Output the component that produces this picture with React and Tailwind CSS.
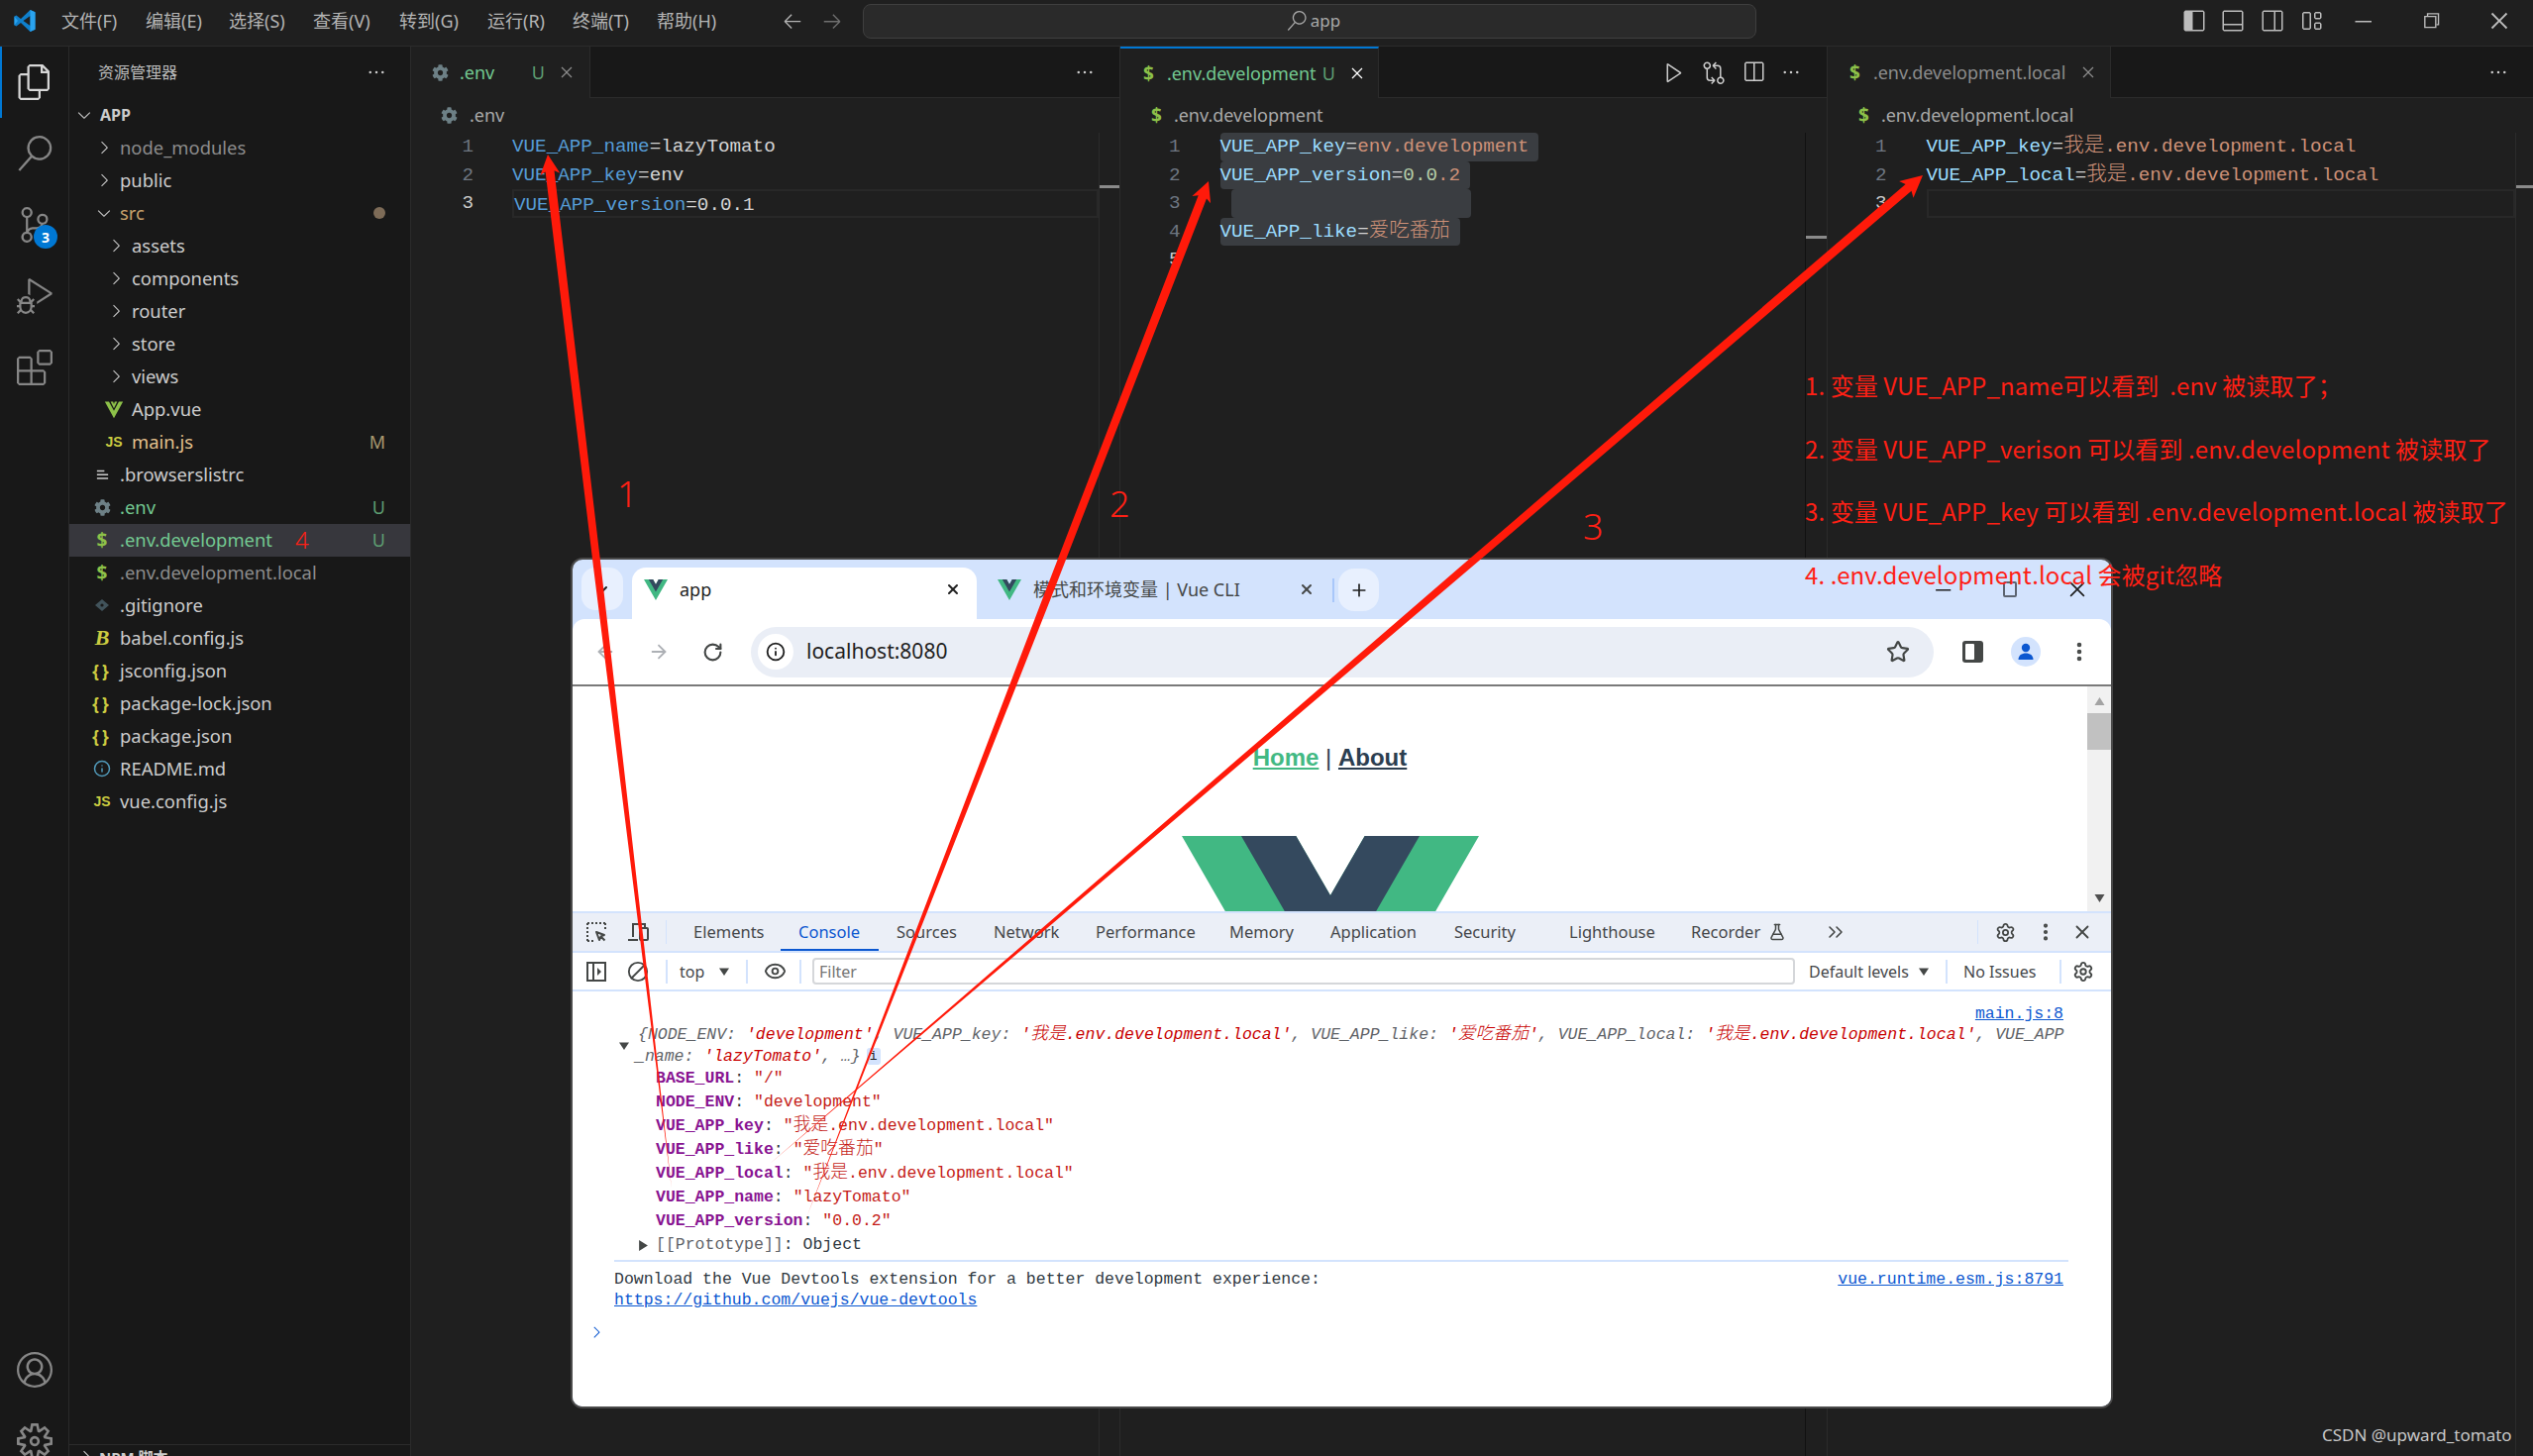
import React from 'react';
import {
  VscFiles, VscSearch, VscSourceControl, VscDebugAlt, VscExtensions, VscAccount, VscSettingsGear,
  VscEllipsis, VscChevronRight, VscChevronDown, VscClose, VscPlay, VscGitCompare, VscSplitHorizontal,
  VscLayoutSidebarLeft, VscLayoutPanelOff, VscLayoutSidebarRightOff, VscLayout,
  VscChromeMinimize, VscChromeRestore, VscChromeClose, VscArrowLeft, VscArrowRight,
} from 'react-icons/vsc';
import { FaCog } from 'react-icons/fa';
import {
  ArrowLeft, ArrowRight, RotateCw, Info, Star, EllipsisVertical, X, Plus, ChevronDown,
  Settings, FlaskConical, ChevronsRight, Eye, Ban,
} from 'lucide-react';

const uiFont = "font-['Noto_Sans','Noto_Sans_CJK_SC',sans-serif]";
const monoFont = "font-['Liberation_Mono','Noto_Sans_CJK_SC',monospace]";

const menus = [
  { label: '文件(F)', w: 'w-[85px]' },
  { label: '编辑(E)', w: 'w-[84px]' },
  { label: '选择(S)', w: 'w-[85px]' },
  { label: '查看(V)', w: 'w-[87px]' },
  { label: '转到(G)', w: 'w-[89px]' },
  { label: '运行(R)', w: 'w-[86px]' },
  { label: '终端(T)', w: 'w-[85px]' },
  { label: '帮助(H)', w: 'w-[85px]' },
];

// Explorer rows
const tree = [
  { label: 'APP', pad: 'pl-[7px]', chevron: 'down', cls: 'text-[#cccccc] font-bold text-[16px]' },
  { label: 'node_modules', pad: 'pl-[27px]', chevron: 'right', cls: 'text-[#8c8c8c]' },
  { label: 'public', pad: 'pl-[27px]', chevron: 'right', cls: 'text-[#cccccc]' },
  { label: 'src', pad: 'pl-[27px]', chevron: 'down', cls: 'text-[#c9a26d]', dot: true },
  { label: 'assets', pad: 'pl-[39px]', chevron: 'right', cls: 'text-[#cccccc]' },
  { label: 'components', pad: 'pl-[39px]', chevron: 'right', cls: 'text-[#cccccc]' },
  { label: 'router', pad: 'pl-[39px]', chevron: 'right', cls: 'text-[#cccccc]' },
  { label: 'store', pad: 'pl-[39px]', chevron: 'right', cls: 'text-[#cccccc]' },
  { label: 'views', pad: 'pl-[39px]', chevron: 'right', cls: 'text-[#cccccc]' },
  { label: 'App.vue', pad: 'pl-[39px]', icon: 'vue', cls: 'text-[#cccccc]' },
  { label: 'main.js', pad: 'pl-[39px]', icon: 'js', cls: 'text-[#e2c08d]', badge: 'M' },
  { label: '.browserslistrc', pad: 'pl-[28px]', icon: 'lines', cls: 'text-[#cccccc]' },
  { label: '.env', pad: 'pl-[28px]', icon: 'gear', cls: 'text-[#73c991]', badge: 'U' },
  { label: '.env.development', pad: 'pl-[28px]', icon: 'dollar', cls: 'text-[#73c991]', badge: 'U', note: '4', active: true },
  { label: '.env.development.local', pad: 'pl-[28px]', icon: 'dollar', cls: 'text-[#8c8c8c]' },
  { label: '.gitignore', pad: 'pl-[28px]', icon: 'git', cls: 'text-[#cccccc]' },
  { label: 'babel.config.js', pad: 'pl-[28px]', icon: 'babel', cls: 'text-[#cccccc]' },
  { label: 'jsconfig.json', pad: 'pl-[28px]', icon: 'json', cls: 'text-[#cccccc]' },
  { label: 'package-lock.json', pad: 'pl-[28px]', icon: 'json', cls: 'text-[#cccccc]' },
  { label: 'package.json', pad: 'pl-[28px]', icon: 'json', cls: 'text-[#cccccc]' },
  { label: 'README.md', pad: 'pl-[28px]', icon: 'info', cls: 'text-[#cccccc]' },
  { label: 'vue.config.js', pad: 'pl-[28px]', icon: 'js', cls: 'text-[#cccccc]' },
];

const VueMark = ({ className }) => (
  <svg viewBox="0 0 261.76 226.69" className={className}>
    <path d="M161.096.001l-30.225 52.351L100.647.001H-.005l130.877 226.688L261.749.001z" fill="#41b883" />
    <path d="M161.096.001l-30.225 52.351L100.647.001H52.346l78.526 136.01L209.398.001z" fill="#34495e" />
  </svg>
);

const Dollar = ({ className = '' }) => <span className={`text-[#8dc149] font-bold text-[19px] leading-none ${className}`}>$</span>;

const FileGlyph = ({ kind }) => {
  if (kind === 'gear') return <FaCog className="text-[#6d8086] w-[17px] h-[17px]" />;
  if (kind === 'dollar') return <Dollar />;
  if (kind === 'js') return <span className="text-[#cbcb41] font-bold text-[14px] leading-none font-['Liberation_Sans',sans-serif]">JS</span>;
  if (kind === 'json') return <span className="text-[#cbcb41] font-bold text-[17px] leading-none tracking-[3px]">{'{}'}</span>;
  if (kind === 'babel') return <span className="text-[#cbcb41] font-bold italic text-[22px] leading-none font-['Liberation_Serif',serif]">B</span>;
  if (kind === 'info') return <Info className="text-[#519aba] w-[18px] h-[18px]" />;
  if (kind === 'vue') {
    return (
      <svg viewBox="0 0 24 24" className="w-[20px] h-[20px]">
        <path d="M1 3h5l6 11 6-11h5L12 23z" fill="#8dc149" />
        <path d="M8 3h3l1 3 1-3h3l-4 8z" fill="#8dc149" />
      </svg>
    );
  }
  if (kind === 'git') {
    return (
      <svg viewBox="0 0 16 16" className="w-[16px] h-[16px]">
        <path d="M8 2l7 6-7 6-7-6z" fill="#41535b" />
        <circle cx="8" cy="8" r="1.6" fill="#181818" />
      </svg>
    );
  }
  if (kind === 'lines') {
    return (
      <svg viewBox="0 0 16 16" className="w-[15px] h-[15px]">
        <path d="M2 3h8v1.6H2zM2 7h12v1.6H2zM2 11h12v1.6H2z" fill="#cccccc" />
      </svg>
    );
  }
  return null;
};

const TreeRow = ({ row }) => (
  <div className={`h-[33px] flex items-center pr-[25px] ${row.pad} ${row.active ? 'bg-[#37373d]' : ''}`}>
    {row.chevron && (
      <span className="w-[16px] mr-[-1px] flex justify-center text-[#c5c5c5]">
        {row.chevron === 'down' ? <VscChevronDown className="w-[20px] h-[20px] shrink-0" /> : <VscChevronRight className="w-[20px] h-[20px] shrink-0" />}
      </span>
    )}
    {row.icon && (
      <span className={`flex items-center justify-center ${row.pad === 'pl-[39px]' ? 'w-[20px] -ml-[4px] mr-[8px]' : 'w-[20px] -ml-[5px] mr-[8px]'}`}>
        <FileGlyph kind={row.icon} />
      </span>
    )}
    <span className={`whitespace-nowrap ${row.chevron ? 'ml-[9px]' : ''} ${row.cls}`}>{row.label}</span>
    {row.note && <span className="ml-[23px] text-[#ff2015] text-[24px] leading-none font-light">{row.note}</span>}
    <span className="ml-auto">
      {row.dot && <span className="block w-[12px] h-[12px] rounded-full bg-[#7d6b57]" />}
      {row.badge && <span className={`block text-[18px] ${row.badge === 'M' ? 'text-[#a8996f]' : 'text-[#5e9e72]'}`}>{row.badge}</span>}
    </span>
  </div>
);

const K = ({ c = 'text-[#9cdcfe]', children }) => <span className={c}>{children}</span>;
const V = ({ children }) => <span className="text-[#ce9178]">{children}</span>;
const Cjk = ({ children }) => <span className="text-[20.5px] leading-[0] font-['Noto_Sans_CJK_SC',sans-serif] font-light">{children}</span>;

// one editor split
const EditorGroup = ({ width, tabWidth, tab, crumbIcon, crumbPad, gutter, codePad, lines, actions, overview, markGap, ruleColor = 'border-[#2b2b2b]' }) => (
  <section className={`${width} shrink-0 flex flex-col border-l border-[#2b2b2b] bg-[#1f1f1f] overflow-hidden`}>
    <div className="h-[52px] shrink-0 flex bg-[#181818] border-b border-[#2b2b2b]">
      <div className={`${tabWidth} h-[52px] shrink-0 flex items-center bg-[#1f1f1f] border-r border-[#2b2b2b] text-[18px] ${tab.activeTab ? 'border-t-2 border-t-[#0078d4]' : ''} ${tab.pad}`}>
        {tab.icon}
        <span className={`ml-[13px] whitespace-nowrap ${tab.color}`}>{tab.label}</span>
        <span className="ml-auto flex items-center gap-[12px]">
          {tab.badge && <span className="text-[#5e9e72] text-[18px]">{tab.badge}</span>}
          <VscClose className={`w-[20px] h-[20px] ${tab.activeTab ? 'text-white' : 'text-[#8c8c8c]'}`} />
        </span>
      </div>
      <div className="ml-auto flex items-center pr-[13px] text-[#cccccc]">{actions}</div>
    </div>
    <div className={`h-[35px] shrink-0 flex items-center gap-[12px] text-[#a9a9a9] text-[18px] ${crumbPad}`}>
      {crumbIcon}
      <span>{tab.label}</span>
    </div>
    <div className="flex-1 flex min-h-0">
      <div className={`${gutter} shrink-0 text-right text-[#6e7681] text-[19.25px] ${monoFont}`}>
        {lines.map((_, i) => (
          <div key={i} className={`h-[28.5px] leading-[28.5px] ${lines[i].current ? 'text-[#cccccc]' : ''}`}>{i + 1}</div>
        ))}
      </div>
      <div className={`flex-1 min-w-0 ${codePad} text-[19.25px] text-[#d4d4d4] whitespace-nowrap ${monoFont}`}>
        {lines.map((l, i) => (
          <div key={i} className={`h-[28.5px] leading-[28.5px] ${l.highlight ? 'border-2 border-[#282828] leading-[23px] box-border' : ''}`}>{l.body}</div>
        ))}
      </div>
      <div className={`${overview} shrink-0 border-l ${ruleColor}`}>
        <div className={`${markGap} h-[3px] bg-[#8a8a8a]`} />
      </div>
    </div>
  </section>
);

// tapered annotation arrow, tail thins out to nothing
const arrowPoints = ([tx, ty], [bx, by], headLen, headW, shaft) => {
  const len = Math.hypot(bx - tx, by - ty);
  const ux = (bx - tx) / len;
  const uy = (by - ty) / len;
  const at = (d, off) => `${(tx + ux * d - uy * off).toFixed(1)},${(ty + uy * d + ux * off).toFixed(1)}`;
  const stations = [[headLen - 3, 1], [len * 0.4, 0.85], [len * 0.8, 0.32], [len, 0]];
  const a = stations.map(([d, k]) => at(d, (shaft / 2) * k));
  const b = stations.slice().reverse().map(([d, k]) => at(d, (-shaft / 2) * k));
  return [at(0, 0), at(headLen, headW / 2), ...a, ...b, at(headLen, -headW / 2)].join(' ');
};

const devtoolsTabs = [
  { label: 'Elements', w: 'w-[106px]' },
  { label: 'Console', w: 'w-[99px]', active: true },
  { label: 'Sources', w: 'w-[98px]' },
  { label: 'Network', w: 'w-[103px]' },
  { label: 'Performance', w: 'w-[135px]' },
  { label: 'Memory', w: 'w-[102px]' },
  { label: 'Application', w: 'w-[125px]' },
  { label: 'Security', w: 'w-[116px]' },
  { label: 'Lighthouse', w: 'w-[123px]' },
  { label: 'Recorder', w: 'w-[134px]', flask: true },
];

const propRows = [
  { key: 'BASE_URL', val: '"/"' },
  { key: 'NODE_ENV', val: '"development"' },
  { key: 'VUE_APP_key', val: <>"<CC>我是</CC>.env.development.local"</> },
  { key: 'VUE_APP_like', val: <>"<CC>爱吃番茄</CC>"</> },
  { key: 'VUE_APP_local', val: <>"<CC>我是</CC>.env.development.local"</> },
  { key: 'VUE_APP_name', val: '"lazyTomato"' },
  { key: 'VUE_APP_version', val: '"0.0.2"' },
];

function CC({ children }) {
  return <span className="text-[17.8px] leading-[0] font-['Noto_Sans_CJK_SC',sans-serif] font-light">{children}</span>;
}

const Sep = ({ className = '' }) => <div className={`w-[2px] h-[24px] bg-[#d3e3fd] shrink-0 ${className}`} />;
const Caret = ({ className = '' }) => (
  <svg viewBox="0 0 10 10" className={`w-[10px] h-[10px] shrink-0 ${className}`}><path d="M0 1.5h10L5 9z" fill="#444746" /></svg>
);

const BrowserWindow = () => (
  <div className={`absolute left-[576px] top-[563px] w-[1557px] h-[859px] border-2 border-[#4a4a4a] rounded-[12px] overflow-hidden bg-[#d3e3fd] flex flex-col ${uiFont}`}>
    {/* tab strip */}
    <div className="h-[60px] shrink-0 flex pl-[9px]">
      <div className="w-[42px] h-[43px] mt-[8px] rounded-[14px] bg-[#e8f0fe] flex items-center justify-center">
        <ChevronDown className="w-[16px] h-[16px] text-[#1f1f1f]" strokeWidth={3} />
      </div>
      <div className="w-[348px] h-[52px] mt-[8px] ml-[9px] rounded-t-[14px] bg-white flex items-center pl-[12px] pr-[16px] pb-[8px]">
        <VueMark className="w-[24px] h-[21px]" />
        <span className="ml-[12px] text-[18px] text-[#1f1f1f]">app</span>
        <X className="ml-auto w-[16px] h-[16px] text-[#1f1f1f]" strokeWidth={3} />
      </div>
      <div className="w-[359px] h-[52px] mt-[8px] flex items-center pl-[21px] pr-[18px] pb-[8px]">
        <VueMark className="w-[24px] h-[21px]" />
        <span className="ml-[12px] text-[18px] text-[#444746] whitespace-nowrap">模式和环境变量 | Vue CLI</span>
        <X className="ml-auto w-[16px] h-[16px] text-[#444746]" strokeWidth={3} />
      </div>
      <div className="w-[2px] h-[24px] mt-[19px] bg-[#a8c7fa]" />
      <div className="w-[41px] h-[43px] mt-[9px] ml-[4px] rounded-[16px] bg-[#e8f0fe] flex items-center justify-center">
        <Plus className="w-[20px] h-[20px] text-[#1f1f1f]" />
      </div>
      <div className="ml-auto flex text-[#1f1f1f]">
        <div className="w-[68px] flex items-center justify-center"><VscChromeMinimize className="w-[22px] h-[22px]" /></div>
        <div className="w-[68px] flex items-center justify-center"><div className="w-[14px] h-[16px] border-2 border-[#5c6470] rounded-[2px]" /></div>
        <div className="w-[68px] flex items-center justify-center"><VscChromeClose className="w-[22px] h-[22px]" /></div>
      </div>
    </div>

    {/* toolbar */}
    <div className="h-[68px] shrink-0 rounded-t-[12px] bg-white border-b-2 border-[#7a7a7a] flex items-center pl-[6px]">
      <div className="w-[54px] flex justify-center"><ArrowLeft className="w-[22px] h-[22px] text-[#adb0b5]" /></div>
      <div className="w-[54px] flex justify-center"><ArrowRight className="w-[22px] h-[22px] text-[#adb0b5]" /></div>
      <div className="w-[54px] flex justify-center"><RotateCw className="w-[21px] h-[21px] text-[#444746]" strokeWidth={2.4} /></div>
      <div className="ml-[12px] w-[1194px] h-[51px] rounded-full bg-[#eaeef6] flex items-center pl-[7px] pr-[24px]">
        <div className="w-[36px] h-[36px] rounded-full bg-white flex items-center justify-center">
          <Info className="w-[20px] h-[20px] text-[#1f1f1f]" strokeWidth={2.2} />
        </div>
        <span className="ml-[13px] text-[21px] text-[#1f1f1f]">localhost:8080</span>
        <Star className="ml-auto w-[24px] h-[24px] text-[#444746]" strokeWidth={2.2} />
      </div>
      <div className="ml-[12px] w-[54px] flex justify-center">
        <div className="w-[21px] h-[22px] rounded-[3px] bg-[#444746] p-[3px] pr-[9px]"><div className="w-full h-full bg-white rounded-[1px]" /></div>
      </div>
      <div className="w-[54px] flex justify-center">
        <div className="w-[30px] h-[30px] rounded-full bg-[#d3e3fd] flex items-center justify-center">
          <svg viewBox="0 0 20 20" className="w-[20px] h-[20px]"><circle cx="10" cy="6" r="4.2" fill="#0b57d0" /><path d="M2.5 18c0-4.6 3.4-6.6 7.5-6.6s7.5 2 7.5 6.6z" fill="#0b57d0" /></svg>
        </div>
      </div>
      <div className="w-[54px] flex justify-center"><EllipsisVertical className="w-[24px] h-[24px] text-[#444746]" strokeWidth={2.6} /></div>
    </div>

    {/* page */}
    <div className="h-[227px] shrink-0 bg-white flex">
      <div className="flex-1 min-w-0 overflow-hidden flex flex-col items-center pt-[58px] font-['Liberation_Sans',sans-serif]">
        <div className="h-[28px] leading-[28px] text-[24px] font-bold text-[#2c3e50] whitespace-nowrap">
          <span className="text-[#42b983] underline">Home</span>
          <span className="font-normal"> | </span>
          <span className="underline">About</span>
        </div>
        <VueMark className="w-[300px] h-[260px] shrink-0 mt-[65px]" />
      </div>
      <div className="w-[24px] shrink-0 bg-[#f1f1f1] flex flex-col items-center">
        <div className="h-[19px] flex items-end"><svg viewBox="0 0 10 8" className="w-[11px] h-[8px]"><path d="M5 0l5 8H0z" fill="#a3a3a3" /></svg></div>
        <div className="mt-[8px] w-full h-[37px] bg-[#c1c1c1]" />
        <div className="mt-auto mb-[9px]"><svg viewBox="0 0 10 8" className="w-[11px] h-[8px]"><path d="M0 0h10L5 8z" fill="#505050" /></svg></div>
      </div>
    </div>

    {/* devtools tabs */}
    <div className="h-[42px] shrink-0 bg-[#ebeff7] border-t-2 border-b-2 border-[#d3e3fd] flex items-center pl-[3px] text-[#45474a] text-[16.5px]">
      <div className="w-[42px] flex justify-center">
        <svg viewBox="0 0 24 24" className="w-[24px] h-[24px]" fill="none" stroke="#444746" strokeWidth="2">
          <path d="M3 3h18M3 3v18M3 21h6M21 3v6" strokeDasharray="2 2" />
          <path d="M12 12l8 3-3.4 1.4L15 20z M16.5 16.5l4 4" strokeLinejoin="round" />
        </svg>
      </div>
      <div className="w-[42px] flex justify-center">
        <svg viewBox="0 0 24 24" className="w-[24px] h-[24px]" fill="none" stroke="#444746" strokeWidth="2">
          <path d="M7 17V4h12v3M2 20h10" />
          <rect x="14" y="8" width="8" height="12" rx="1" />
        </svg>
      </div>
      <div className="ml-[7px] w-[1px] h-[24px] bg-[#d3e3fd] shrink-0" />
      <div className="ml-[27px] flex h-full">
        {devtoolsTabs.map((t) => (
          <div key={t.label} className={`${t.w} relative flex items-center gap-[8px] ${t.active ? 'text-[#0b57d0]' : ''}`}>
            <span>{t.label}</span>
            {t.flask && <FlaskConical className="w-[18px] h-[20px] text-[#444746]" />}
            {t.active && <div className="absolute left-[-18px] w-[99px] bottom-0 h-[2px] bg-[#0b57d0]" />}
          </div>
        ))}
      </div>
      <ChevronsRight className="w-[24px] h-[24px] text-[#444746]" strokeWidth={1.6} />
      <div className="ml-auto w-[1px] h-[24px] bg-[#d3e3fd] mr-[6px]" />
      <div className="w-[42px] flex justify-center"><Settings className="w-[21px] h-[21px] text-[#444746]" /></div>
      <div className="w-[40px] flex justify-center"><EllipsisVertical className="w-[22px] h-[22px] text-[#444746]" strokeWidth={2.6} /></div>
      <div className="w-[34px] flex justify-center mr-[12px]"><X className="w-[22px] h-[22px] text-[#444746]" /></div>
    </div>

    {/* console toolbar */}
    <div className="h-[39px] shrink-0 bg-white border-b-2 border-[#d3e3fd] flex items-center pl-[3px] text-[#45474a] text-[16px]">
      <div className="w-[42px] flex justify-center">
        <svg viewBox="0 0 22 22" className="w-[22px] h-[22px]" fill="none" stroke="#444746" strokeWidth="2">
          <rect x="2" y="2" width="18" height="18" />
          <path d="M8 2v18" />
          <path d="M12 7l4 4-4 4z" fill="#444746" stroke="none" />
        </svg>
      </div>
      <div className="w-[42px] flex justify-center"><Ban className="w-[22px] h-[22px] text-[#444746] -scale-x-100" /></div>
      <Sep className="ml-[7px]" />
      <span className="ml-[12px] w-[39px]">top</span>
      <Caret className="ml-[1px]" />
      <Sep className="ml-[17px]" />
      <div className="ml-[7px] w-[40px] flex justify-center"><Eye className="w-[23px] h-[23px] text-[#444746]" /></div>
      <Sep className="ml-[5px]" />
      <div className="ml-[11px] w-[992px] h-[27px] border-2 border-[#d5d7da] rounded-[4px] flex items-center pl-[5px] text-[#757575]">Filter</div>
      <span className="ml-[14px] w-[105px] whitespace-nowrap">Default levels</span>
      <Caret className="ml-[6px]" />
      <Sep className="ml-[17px]" />
      <span className="ml-[16px] w-[76px] whitespace-nowrap">No Issues</span>
      <Sep className="ml-[21px]" />
      <Settings className="ml-[11px] w-[22px] h-[22px] text-[#444746]" />
    </div>

    {/* console */}
    <div className={`flex-1 min-h-0 bg-white pt-[12px] text-[16.5px] whitespace-nowrap ${monoFont}`}>
      <div className="h-[22px] leading-[22px] text-right pr-[48px] text-[#0b57d0] underline">main.js:8</div>
      <div className="flex items-center -mt-[1px] ml-[42px]">
        <div className="w-[20px] flex justify-center"><Caret /></div>
        <div className="italic text-[#5f6368]">
          <div className="h-[22px] leading-[22px] pl-[4px]">
            {'{'}NODE_ENV: <span className="text-[#c80000]">'development'</span>, VUE_APP_key: <span className="text-[#c80000]">'<CC>我是</CC>.env.development.local'</span>, VUE_APP_like: <span className="text-[#c80000]">'<CC>爱吃番茄</CC>'</span>, VUE_APP_local: <span className="text-[#c80000]">'<CC>我是</CC>.env.development.local'</span>, VUE_APP
          </div>
          <div className="h-[21px] leading-[21px] pl-[1px] flex items-center">
            <span>_name: <span className="text-[#c80000]">'lazyTomato'</span>, …{'}'}</span>
            <span className="ml-[6px] w-[14px] h-[17px] rounded-[3px] bg-[#d3e3fd] text-[#1f1f1f] not-italic text-[13px] flex items-center justify-center">i</span>
          </div>
        </div>
      </div>
      {propRows.map((r) => (
        <div key={r.key} className="h-[24px] leading-[24px] pl-[84px] text-[#c41a16]">
          <span className="text-[#881391] font-bold">{r.key}</span><span className="text-[#303942]">: </span>{r.val}
        </div>
      ))}
      <div className="h-[24px] flex items-center pl-[67px] text-[#5f6368]">
        <svg viewBox="0 0 8 10" className="w-[9px] h-[11px] mr-[8px]"><path d="M0 0l8 5-8 5z" fill="#444746" /></svg>
        <span>[[Prototype]]</span><span className="text-[#303942]">: Object</span>
      </div>
      <div className="mt-[3px] ml-[42px] mr-[43px] pt-[7px] border-t-2 border-[#d3e3fd]">
        <div className="h-[21px] leading-[21px] flex justify-between pr-[5px] text-[#303942]">
          <span>Download the Vue Devtools extension for a better development experience:</span>
          <span className="text-[#0b57d0] underline">vue.runtime.esm.js:8791</span>
        </div>
        <div className="h-[21px] leading-[21px] text-[#0b57d0] underline">https://github.com/vuejs/vue-devtools</div>
      </div>
      <div className="mt-[11px] ml-[15px] h-[22px] flex items-center">
        <VscChevronRight className="w-[18px] h-[18px] text-[#0b57d0]" />
      </div>
    </div>
  </div>
);

export default function App() {
  const groups = [
    {
      width: 'w-[716px]',
      tabWidth: 'w-[181px]',
      tab: { label: '.env', color: 'text-[#73c991]', badge: 'U', pad: 'pl-[21px] pr-[13px]', icon: <FaCog className="text-[#6d8086] w-[17px] h-[17px] -mr-[2px]" /> },
      crumbIcon: <FaCog className="text-[#6d8086] w-[17px] h-[17px]" />,
      crumbPad: 'pl-[30px]',
      gutter: 'w-[63px]',
      codePad: 'pl-[39px]',
      overview: 'w-[21px]',
      markGap: 'mt-[53px]',
      lines: [
        { body: <><K c="text-[#569cd6]">VUE_APP_name</K>=lazyTomato</> },
        { body: <><K c="text-[#569cd6]">VUE_APP_key</K>=env</> },
        { current: true, highlight: true, body: <><K c="text-[#569cd6]">VUE_APP_version</K>=0.0.1</> },
      ],
      actions: <VscEllipsis className="w-[20px] h-[20px] mr-[12px]" />,
    },
    {
      width: 'w-[714px]',
      tabWidth: 'w-[261px]',
      tab: { label: '.env.development', color: 'text-[#73c991]', badge: 'U', pad: 'pl-[23px] pr-[11px]', activeTab: true, icon: <Dollar /> },
      crumbIcon: <Dollar />,
      crumbPad: 'pl-[31px]',
      gutter: 'w-[60.5px]',
      codePad: 'pl-[40px]',
      overview: 'w-[22px]',
      markGap: 'mt-[104px]',
      ruleColor: 'border-[#111111]',
      lines: [
        { body: <span className="inline-block h-full pr-[10px] bg-[#3a3d41] rounded-[4px]"><K>VUE_APP_key</K>=<V>env.development</V></span> },
        { body: <span className="inline-block h-full pr-[10px] bg-[#3a3d41] rounded-[4px]"><K>VUE_APP_version</K>=<span className="text-[#b5cea8]">0.0</span><V>.2</V></span> },
        { body: <span className="block h-full w-[242px] ml-[11px] bg-[#3a3d41] rounded-[4px]" /> },
        { body: <span className="inline-block h-full pr-[10px] bg-[#3a3d41] rounded-[4px]"><K>VUE_APP_like</K>=<V><Cjk>爱吃番茄</Cjk></V></span> },
        { current: true, body: '' },
      ],
      actions: (
        <>
          <VscPlay className="w-[24px] h-[24px] mr-[16px]" />
          <VscGitCompare className="w-[24px] h-[24px] mr-[16px]" />
          <VscSplitHorizontal className="w-[24px] h-[24px] mr-[16px]" />
          <VscEllipsis className="w-[20px] h-[20px] mr-[13px]" />
        </>
      ),
    },
    {
      width: 'w-[713px]',
      tabWidth: 'w-[286px]',
      tab: { label: '.env.development.local', color: 'text-[#8c8c8c]', pad: 'pl-[22px] pr-[12px]', icon: <Dollar /> },
      crumbIcon: <Dollar />,
      crumbPad: 'pl-[31px]',
      gutter: 'w-[59.5px]',
      codePad: 'pl-[40px]',
      overview: 'w-[18px]',
      markGap: 'mt-[53px]',
      lines: [
        { body: <><K>VUE_APP_key</K>=<V><Cjk>我是</Cjk>.env.development.local</V></> },
        { body: <><K>VUE_APP_local</K>=<V><Cjk>我是</Cjk>.env.development.local</V></> },
        { current: true, highlight: true, body: '' },
      ],
      actions: <VscEllipsis className="w-[20px] h-[20px] mr-[12px]" />,
    },
  ];

  return (
    <div className={`relative w-[2557px] h-[1470px] overflow-hidden bg-[#1f1f1f] text-[#cccccc] text-[18.4px] ${uiFont}`}>
      {/* title bar */}
      <header className="h-[47px] flex items-center border-b border-[#2b2b2b] pb-[4px] text-[18px]">
        <div className="w-[62px] shrink-0 flex justify-center pr-[12px]">
          <svg viewBox="0 0 24 24" className="w-[24px] h-[26px]">
            <path d="M17.5 1L8 10 3.5 6.4 1.5 7.4v9.2l2 1L8 14l9.5 9 5-2.2V3.2z" fill="#0f7fcb" />
            <path d="M17.5 7L10.5 12l7 5z" fill="#1f1f1f" />
            <path d="M1.5 7.4L5 12l-3.5 4.6zM17.5 1l5 2.2v17.6l-5 2.2z" fill="#2aa3ef" />
          </svg>
        </div>
        {menus.map((m) => (
          <span key={m.label} className={`${m.w} whitespace-nowrap text-[#b4b4b4]`}>{m.label}</span>
        ))}
        <VscArrowLeft className="ml-[41px] w-[22px] h-[22px] text-[#b4b4b4]" />
        <VscArrowRight className="ml-[18px] w-[22px] h-[22px] text-[#6f6f6f]" />
        <div className="ml-[20px] w-[902px] h-[35px] rounded-[8px] bg-[#2a2a2a] border border-[#3f3f3f] flex items-center justify-center gap-[4px] text-[#a9a9a9] text-[17px] pl-[8px]">
          <VscSearch className="w-[20px] h-[20px]" />
          <span>app</span>
        </div>
        <div className="ml-[422px] flex text-[#bdbdbd]">
          <div className="w-[39.5px] flex justify-center"><VscLayoutSidebarLeft className="w-[24px] h-[24px]" /></div>
          <div className="w-[39.5px] flex justify-center"><VscLayoutPanelOff className="w-[24px] h-[24px]" /></div>
          <div className="w-[39.5px] flex justify-center"><VscLayoutSidebarRightOff className="w-[24px] h-[24px]" /></div>
          <div className="w-[39.5px] flex justify-center"><VscLayout className="w-[24px] h-[24px]" /></div>
        </div>
        <div className="flex text-[#bdbdbd] -ml-[3px]">
          <div className="w-[69px] flex justify-center"><VscChromeMinimize className="w-[24px] h-[24px]" /></div>
          <div className="w-[69px] flex justify-center"><VscChromeRestore className="w-[22px] h-[22px]" /></div>
          <div className="w-[69px] flex justify-center"><VscChromeClose className="w-[24px] h-[24px]" /></div>
        </div>
      </header>

      <div className="flex h-[1423px]">
        {/* activity bar */}
        <aside className="w-[69px] shrink-0 flex flex-col bg-[#181818] text-[#868686]">
          <div className="h-[72px] shrink-0 flex items-center justify-center border-l-2 border-[#0078d4] text-[#d7d7d7] pr-[2px]"><VscFiles className="w-[36px] h-[36px]" /></div>
          <div className="h-[72px] shrink-0 flex items-center justify-center"><VscSearch className="w-[36px] h-[36px]" /></div>
          <div className="h-[72px] shrink-0 flex items-center justify-center relative">
            <VscSourceControl className="w-[36px] h-[36px]" />
            <span className="absolute left-[34px] top-[36px] w-[24px] h-[24px] rounded-full bg-[#0078d4] text-white text-[14px] font-bold flex items-center justify-center">3</span>
          </div>
          <div className="h-[72px] shrink-0 flex items-center justify-center"><VscDebugAlt className="w-[36px] h-[36px]" /></div>
          <div className="h-[72px] shrink-0 flex items-center justify-center"><VscExtensions className="w-[36px] h-[36px]" /></div>
          <div className="mt-auto -mb-[21px] shrink-0">
            <div className="h-[72px] flex items-center justify-center"><VscAccount className="w-[36px] h-[36px]" /></div>
            <div className="h-[72px] flex items-center justify-center"><VscSettingsGear className="w-[36px] h-[36px]" /></div>
          </div>
        </aside>

        {/* explorer */}
        <aside className="w-[345px] shrink-0 flex flex-col bg-[#181818] border-l border-[#2b2b2b]">
          <div className="h-[52.5px] shrink-0 flex items-center justify-between pl-[29px] pr-[24px] text-[16px] text-[#bbbbbb]">
            <span>资源管理器</span>
            <VscEllipsis className="w-[20px] h-[20px] text-[#cccccc]" />
          </div>
          {tree.map((row) => <TreeRow key={row.label} row={row} />)}
          <div className="mt-auto h-[12px] shrink-0 overflow-hidden border-t border-[#2b2b2b]">
            <div className="h-[24px] flex items-center pl-[7px] text-[15px] font-bold text-[#cccccc]">
              <VscChevronRight className="w-[20px] h-[20px] mr-[3px]" />
              NPM 脚本
            </div>
          </div>
        </aside>

        {groups.map((g) => <EditorGroup key={g.tab.label} {...g} />)}
      </div>

      <BrowserWindow />

      {/* red notes drawn on the screenshot */}
      <svg className="absolute inset-0 pointer-events-none" width="2557" height="1470">
        <polygon fill="#ff1a0a" points={arrowPoints([553, 156], [678, 1200], 20, 20, 9)} />
        <polygon fill="#ff1a0a" points={arrowPoints([1220, 183], [815, 1227], 20, 20, 9)} />
        <polygon fill="#ff1a0a" points={arrowPoints([1941, 177], [777, 1175], 22, 22, 9)} />
      </svg>
      <div className="absolute left-[1822px] top-[373px] flex flex-col gap-[31.7px] text-[24px] leading-[32px] tracking-[0.1px] text-[#ff2015] whitespace-nowrap font-['Noto_Sans_CJK_SC',sans-serif]">
        <div>1. 变量 VUE_APP_name可以看到 &nbsp;.env 被读取了；</div>
        <div>2. 变量 VUE_APP_verison 可以看到 .env.development 被读取了</div>
        <div>3. 变量 VUE_APP_key 可以看到 .env.development.local 被读取了</div>
        <div>4. .env.development.local 会被git忽略</div>
      </div>
      <span className="absolute left-[623px] top-[478px] text-[36px] leading-[42px] font-light text-[#ff2015]">1</span>
      <span className="absolute left-[1120px] top-[488px] text-[36px] leading-[42px] font-light text-[#ff2015]">2</span>
      <span className="absolute left-[1598px] top-[511px] text-[36px] leading-[42px] font-light text-[#ff2015]">3</span>
      <span className="absolute left-[2344px] top-[1438px] text-[17px] leading-[22px] text-[#c8c8c8]">CSDN @upward_tomato</span>
    </div>
  );
}
